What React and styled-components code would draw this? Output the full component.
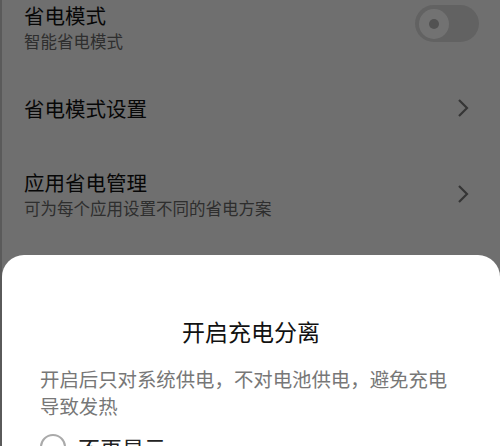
import styled, { createGlobalStyle } from "styled-components";

const Global = createGlobalStyle`
  html, body {
    margin: 0;
    padding: 0;
    background: #f6f6f6;
  }
  body {
    font-family: "Noto Sans CJK SC", "Noto Sans", sans-serif;
  }
`;

const Screen = styled.div`
  position: relative;
  width: 500px;
  height: 446px;
  overflow: hidden;
  background: #f6f6f6;
  border-left: 2px solid #5a5a5a;
  box-sizing: border-box;
`;

const List = styled.div`
  display: flex;
  flex-direction: column;
  margin-top: -24px;
  padding: 0 22px 0 22px;
`;

const Row = styled.div`
  display: flex;
  align-items: center;
  justify-content: space-between;
  height: ${(p) => p.h}px;
`;

const Texts = styled.div`
  display: flex;
  flex-direction: column;
  gap: ${(p) => p.gap || 0}px;
`;

const Title = styled.div`
  font-size: 20.5px;
  line-height: 26px;
  color: #111;
`;

const Sub = styled.div`
  font-size: 16.5px;
  line-height: 22px;
  color: #666;
`;

const Toggle = styled.div`
  width: 64px;
  height: 37px;
  border-radius: 19px;
  background: #d9d9d9;
  margin: 0 -1px 6px 0;
  display: flex;
  align-items: center;
  padding-left: 4px;
  box-sizing: border-box;
`;

const Knob = styled.div`
  width: 30px;
  height: 30px;
  border-radius: 50%;
  background: #fdfdfd;
  display: flex;
  align-items: center;
  justify-content: center;
`;

const Dot = styled.div`
  width: 10px;
  height: 10px;
  border-radius: 50%;
  background: #b5b5b5;
`;

const Chevron = () => (
  <svg width="14" height="20" viewBox="0 0 14 20" style={{ marginRight: 8 }}>
    <path d="M3 2 L11 10 L3 18" fill="none" stroke="#777" strokeWidth="2.2" />
  </svg>
);

const Dim = styled.div`
  position: absolute;
  inset: 0;
  background: rgba(0, 0, 0, 0.55);
`;

const Sheet = styled.div`
  position: absolute;
  left: 0;
  right: 0;
  top: 255px;
  height: 320px;
  background: #fff;
  border-radius: 22px 22px 0 0;
  padding: 60px 38px 0 38px;
  box-sizing: border-box;
  display: flex;
  flex-direction: column;
`;

const SheetTitle = styled.div`
  text-align: center;
  font-size: 23px;
  line-height: 32px;
  color: #111;
`;

const Body = styled.div`
  margin-top: 18px;
  font-size: 19.4px;
  line-height: 27px;
  color: #777;
`;

const Check = styled.label`
  display: flex;
  align-items: center;
  gap: 12px;
  margin-top: 12px;
  font-size: 22px;
  color: #222;
`;

const Radio = styled.span`
  width: 22px;
  height: 22px;
  border: 2px solid #aaa;
  border-radius: 50%;
  flex-shrink: 0;
`;

export default function App() {
  return (
    <>
      <Global />
      <Screen>
        <List>
          <Row h={101}>
            <Texts gap={2}>
              <Title>省电模式</Title>
              <Sub>智能省电模式</Sub>
            </Texts>
            <Toggle>
              <Knob>
                <Dot />
              </Knob>
            </Toggle>
          </Row>
          <Row h={62}>
            <Title>省电模式设置</Title>
            <Chevron />
          </Row>
          <Row h={110}>
            <Texts gap={2}>
              <Title>应用省电管理</Title>
              <Sub>可为每个应用设置不同的省电方案</Sub>
            </Texts>
            <Chevron />
          </Row>
        </List>
        <Dim />
        <Sheet>
          <SheetTitle>开启充电分离</SheetTitle>
          <Body>开启后只对系统供电，不对电池供电，避免充电导致发热</Body>
          <Check>
            <Radio />
            不再显示
          </Check>
        </Sheet>
      </Screen>
    </>
  );
}
